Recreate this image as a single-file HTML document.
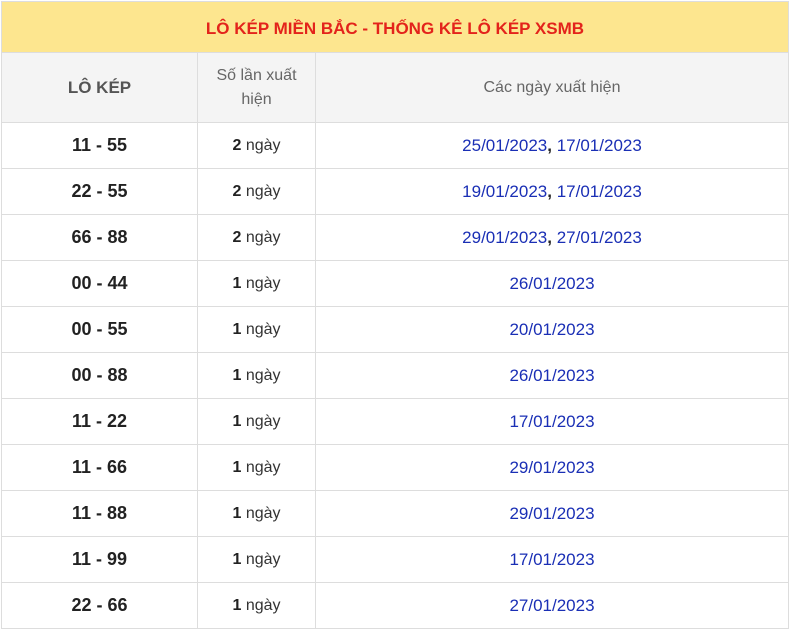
<!DOCTYPE html>
<html><head><meta charset="utf-8"><style>
body{margin:0;background:#fff;font-family:"Liberation Sans",Arial,sans-serif;}
table{position:absolute;left:1px;top:1px;width:788px;border-collapse:collapse;}
td,th{border:1px solid #ddd;text-align:center;padding:0;}
.t{background:#fde68f;height:46px;color:#e3231b;font-weight:bold;font-size:17px;padding-top:4px;}
.h th{background:#f4f4f4;height:69px;font-weight:normal;color:#666;font-size:16px;line-height:24px;}
.h th.b{font-weight:bold;font-size:17px;color:#555;}
tr.r td{height:45px;font-size:16px;color:#333;}
tr.r td.k{font-weight:bold;font-size:18px;color:#222;}
tr.r td.d{color:#1a2fb5;font-size:17px;}
b{color:#222;}
</style></head><body>
<table>
<tr><td class="t" colspan="3">LÔ KÉP MIỀN BẮC - THỐNG KÊ LÔ KÉP XSMB</td></tr>
<tr class="h"><th class="b" style="width:195px">LÔ KÉP</th><th style="width:117px">Số lần xuất<br>hiện</th><th>Các ngày xuất hiện</th></tr>
<tr class="r"><td class="k">11 - 55</td><td><b>2</b> ngày</td><td class="d">25/01/2023<b>,</b> 17/01/2023</td></tr>
<tr class="r"><td class="k">22 - 55</td><td><b>2</b> ngày</td><td class="d">19/01/2023<b>,</b> 17/01/2023</td></tr>
<tr class="r"><td class="k">66 - 88</td><td><b>2</b> ngày</td><td class="d">29/01/2023<b>,</b> 27/01/2023</td></tr>
<tr class="r"><td class="k">00 - 44</td><td><b>1</b> ngày</td><td class="d">26/01/2023</td></tr>
<tr class="r"><td class="k">00 - 55</td><td><b>1</b> ngày</td><td class="d">20/01/2023</td></tr>
<tr class="r"><td class="k">00 - 88</td><td><b>1</b> ngày</td><td class="d">26/01/2023</td></tr>
<tr class="r"><td class="k">11 - 22</td><td><b>1</b> ngày</td><td class="d">17/01/2023</td></tr>
<tr class="r"><td class="k">11 - 66</td><td><b>1</b> ngày</td><td class="d">29/01/2023</td></tr>
<tr class="r"><td class="k">11 - 88</td><td><b>1</b> ngày</td><td class="d">29/01/2023</td></tr>
<tr class="r"><td class="k">11 - 99</td><td><b>1</b> ngày</td><td class="d">17/01/2023</td></tr>
<tr class="r"><td class="k">22 - 66</td><td><b>1</b> ngày</td><td class="d">27/01/2023</td></tr>
</table>
</body></html>
